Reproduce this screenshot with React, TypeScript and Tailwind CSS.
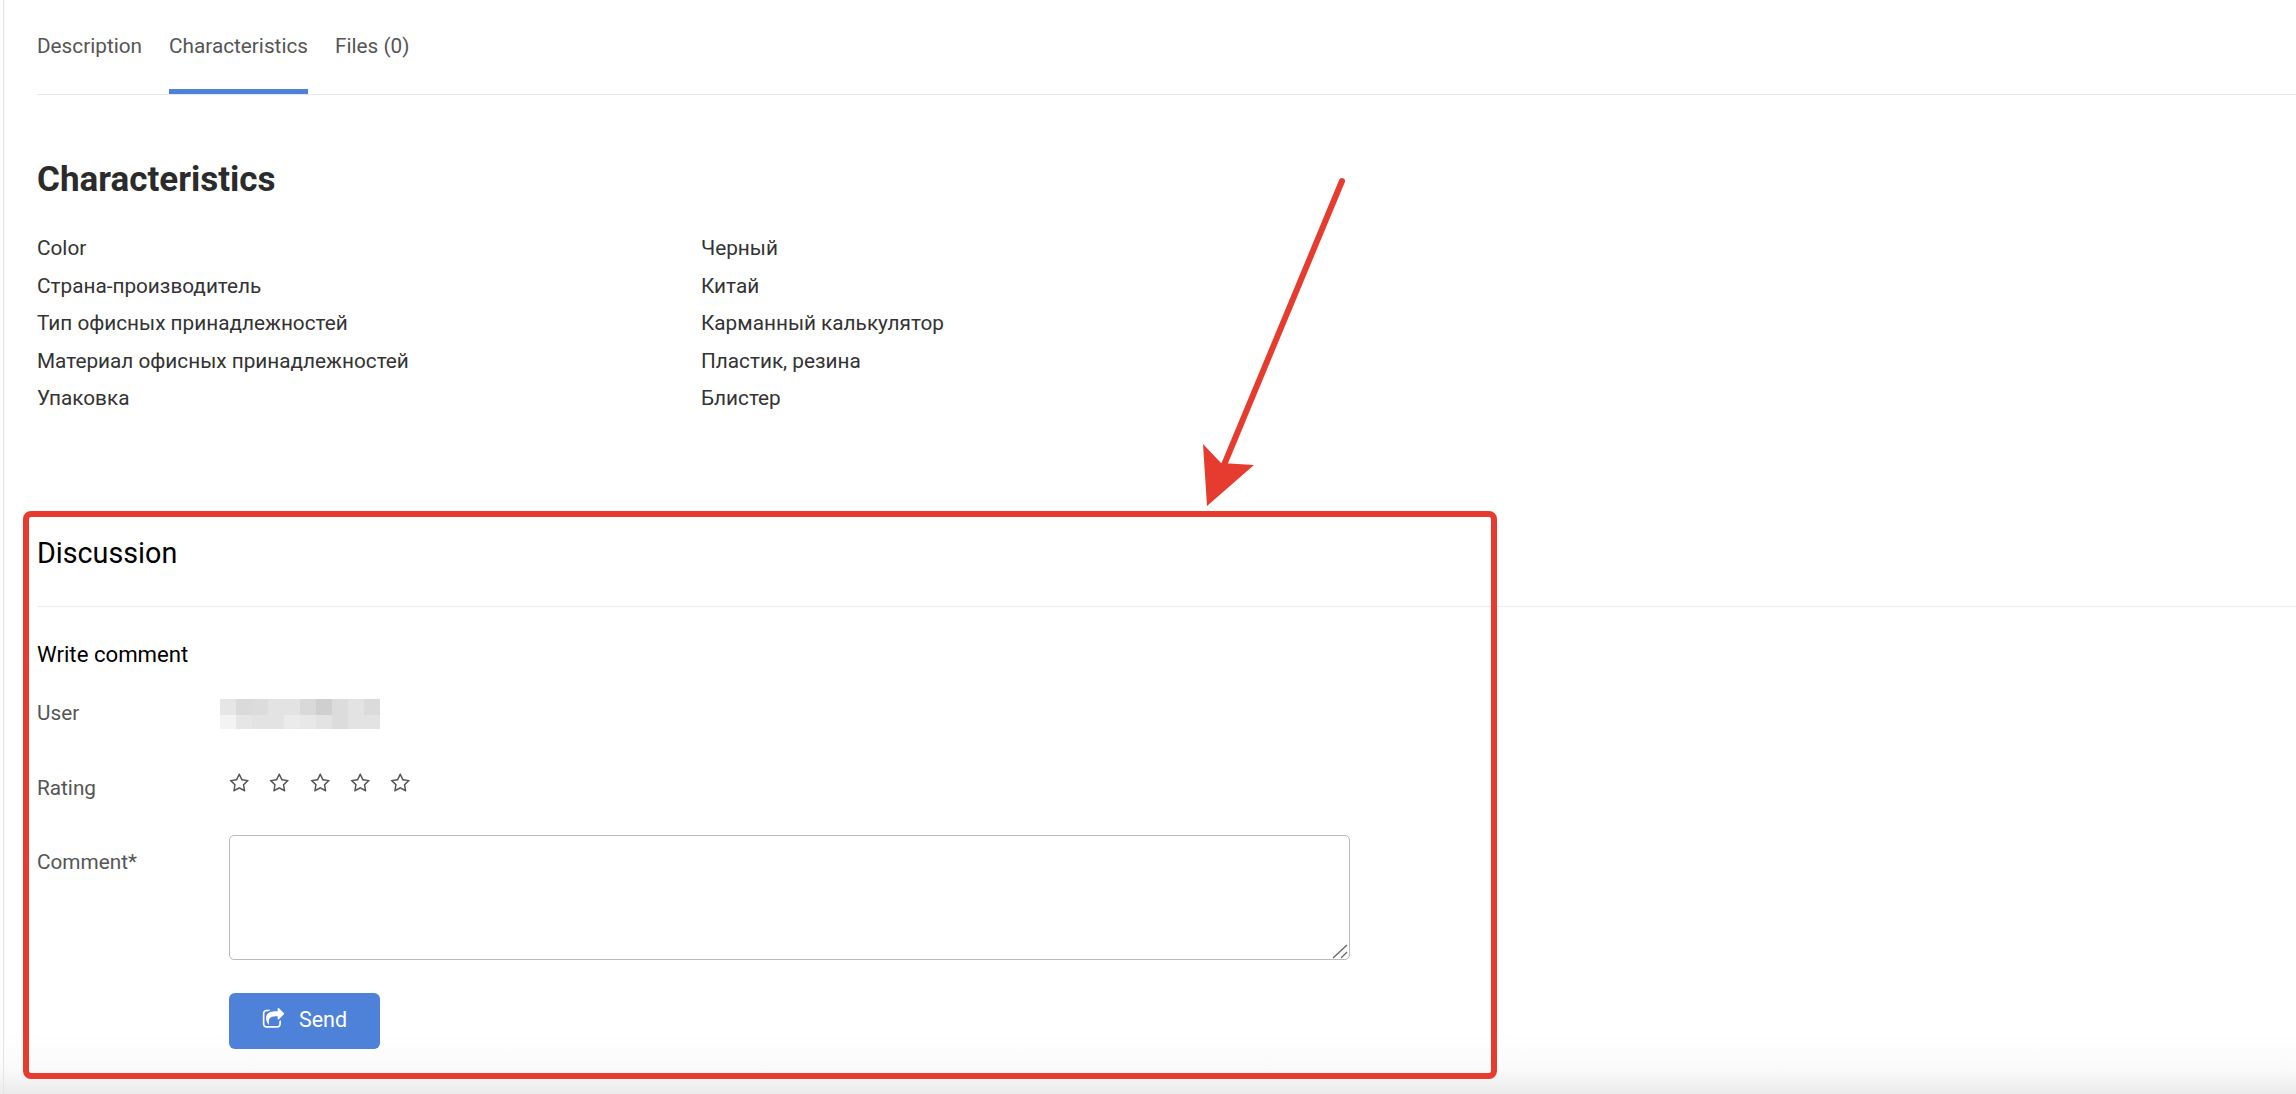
const TABS = ["Description", "Characteristics", "Files (0)"];

const SPECS = [
  ["Color", "Черный"],
  ["Страна-производитель", "Китай"],
  ["Тип офисных принадлежностей", "Карманный калькулятор"],
  ["Материал офисных принадлежностей", "Пластик, резина"],
  ["Упаковка", "Блистер"],
];

// the pixelated, censored user name
const BLUR_TOP = [
  "bg-[#e6e6e6]", "bg-[#dadada]", "bg-[#dcdcdc]", "bg-[#e3e3e3]", "bg-[#e3e3e3]",
  "bg-[#d9d9d9]", "bg-[#cfcfcf]", "bg-[#dcdcdc]", "bg-[#e3e3e3]", "bg-[#dbdbdb]",
];
const BLUR_BOTTOM = [
  "bg-[#f3f3f3]", "bg-[#e6e6e6]", "bg-[#e3e3e3]", "bg-[#e3e3e3]", "bg-[#ebebeb]",
  "bg-[#e8e8e8]", "bg-[#e3e3e3]", "bg-[#dcdcdc]", "bg-[#e3e3e3]", "bg-[#e3e3e3]",
];

function StarOutline() {
  return (
    <svg width="20.5" height="20.5" viewBox="0 0 1792 1792" fill="#555555">
      <path d="M1201 1004l306-297-422-62-189-382-189 382-422 62 306 297-73 421 378-199 377 199zm527-357q0 22-26 48l-363 354 86 500q1 7 1 20 0 50-41 50-19 0-40-12l-449-236-449 236q-22 12-40 12-21 0-31.5-14.5t-10.5-35.5q0-6 2-20l86-500-364-354q-25-27-25-48 0-37 56-46l502-73 225-455q19-41 49-41t49 41l225 455 502 73q56 9 56 46z" />
    </svg>
  );
}

function ShareIcon() {
  return (
    <svg width="23" height="23" viewBox="0 0 1792 1792" fill="currentColor" className="-mt-[3px]">
      <path d="M1472 989v259q0 119-84.5 203.5t-203.5 84.5h-832q-119 0-203.5-84.5t-84.5-203.5v-832q0-119 84.5-203.5t203.5-84.5h255q13 0 22.5 9.5t9.5 22.5q0 27-26 32-77 26-133 60-10 4-16 4h-112q-66 0-113 47t-47 113v832q0 66 47 113t113 47h832q66 0 113-47t47-113v-214q0-19 18-29 28-13 54-37 16-16 35-8 21 9 21 29zm237-496l-384 384q-18 19-45 19-12 0-25-5-39-17-39-59v-192h-160q-323 0-438 131-119 137-74 473 3 23-20 34-8 2-12 2-16 0-26-13-10-14-21-31t-39.5-68.5-49.5-99.5-38.5-114-17.5-122q0-49 3.5-91t14-90 28-88 47-81.5 68.5-74 94.5-61.5 124.5-48.5 159.5-30.5 196.5-11h160v-192q0-42 39-59 13-5 25-5 26 0 45 19l384 384q19 19 19 45t-19 45z" />
    </svg>
  );
}

function Annotation() {
  return (
    <>
      <div className="absolute left-[23px] top-[511px] w-[1474px] h-[568px] border-[6px] border-[#e63c30] rounded-[8px] pointer-events-none" />
      <svg className="absolute left-[1190px] top-[170px] pointer-events-none" width="170" height="345" viewBox="1190 170 170 345">
        <line x1="1342" y1="181" x2="1224" y2="465" stroke="#e63c30" strokeWidth="6" strokeLinecap="round" />
        <polygon points="1203,444 1221,463 1254,465 1207,506" fill="#e63c30" />
      </svg>
    </>
  );
}

export default function App() {
  return (
    <div className="relative h-[1094px] overflow-hidden bg-white font-['Roboto',sans-serif] text-[20.75px]">
      {/* fade at the bottom of the capture, behind the content */}
      <div className="absolute left-0 right-0 bottom-0 h-[60px] bg-gradient-to-b from-white via-[#fafafa] via-60% to-[#ebebeb]" />

      <div className="relative ml-[3px] h-full border-l border-[#e4e4e4] pl-[33px]">
        {/* Tabs */}
        <div className="flex gap-[27px] border-b border-[#e5e7ea] h-[95px]">
          {TABS.map((t) => (
            <div
              key={t}
              className={
                "h-[94px] pt-[33px] leading-[26px] text-[#555555] " +
                (t === "Characteristics" ? "border-b-[5px] border-[#4e81d8]" : "")
              }
            >
              {t}
            </div>
          ))}
        </div>

        <h2 className="mt-[64px] text-[35px] leading-[42px] font-bold text-[#2b2b2b]">Characteristics</h2>

        <div className="mt-[29px] text-[#333333]">
          {SPECS.map(([k, v]) => (
            <div key={k} className="flex h-[37.5px] items-center">
              <div className="w-[664px]">{k}</div>
              <div>{v}</div>
            </div>
          ))}
        </div>

        {/* Discussion */}
        <h3 className="mt-[115px] text-[28.7px] leading-[40px] text-black pb-[33px] border-b border-[#eeeeee]">Discussion</h3>

        <h4 className="mt-[32px] text-[22.2px] leading-[30px] text-black">Write comment</h4>

        <div className="mt-[30px] flex items-center h-[30px] text-[#555555]">
          <div className="w-[183px]">User</div>
          <div className="w-[160px]">
            <div className="grid grid-cols-10 h-[16px]">
              {BLUR_TOP.map((c, i) => (
                <div key={i} className={c} />
              ))}
            </div>
            <div className="grid grid-cols-10 h-[14px]">
              {BLUR_BOTTOM.map((c, i) => (
                <div key={i} className={c} />
              ))}
            </div>
          </div>
        </div>

        <div className="mt-[45px] flex h-[30px] items-center text-[#555555]">
          <div className="w-[192px]">Rating</div>
          <div className="flex gap-[19.8px] self-start -mt-[1px]">
            {[0, 1, 2, 3, 4].map((i) => (
              <StarOutline key={i} />
            ))}
          </div>
        </div>

        <div className="mt-[31px] flex text-[#555555]">
          <div className="w-[192px] mt-[12px] leading-[30px]">Comment*</div>
          <div className="relative w-[1121px] h-[125px]">
            <textarea className="block w-full h-full resize-none border border-[#bbbbbb] rounded-[5px] outline-none" />
            <svg className="absolute right-[2px] bottom-[1px]" width="16" height="15" viewBox="0 0 16 15" stroke="#666666" strokeWidth="1.3">
              <line x1="1" y1="14" x2="15" y2="1" />
              <line x1="9" y1="14" x2="15" y2="8" />
            </svg>
          </div>
        </div>

        <div className="mt-[33px] ml-[192px]">
          <button className="flex items-center justify-center gap-[14px] w-[151px] h-[56px] rounded-[6px] bg-[#4e81d8] text-white text-[21.5px]">
            <ShareIcon />
            Send
          </button>
        </div>
      </div>

      <Annotation />
    </div>
  );
}
